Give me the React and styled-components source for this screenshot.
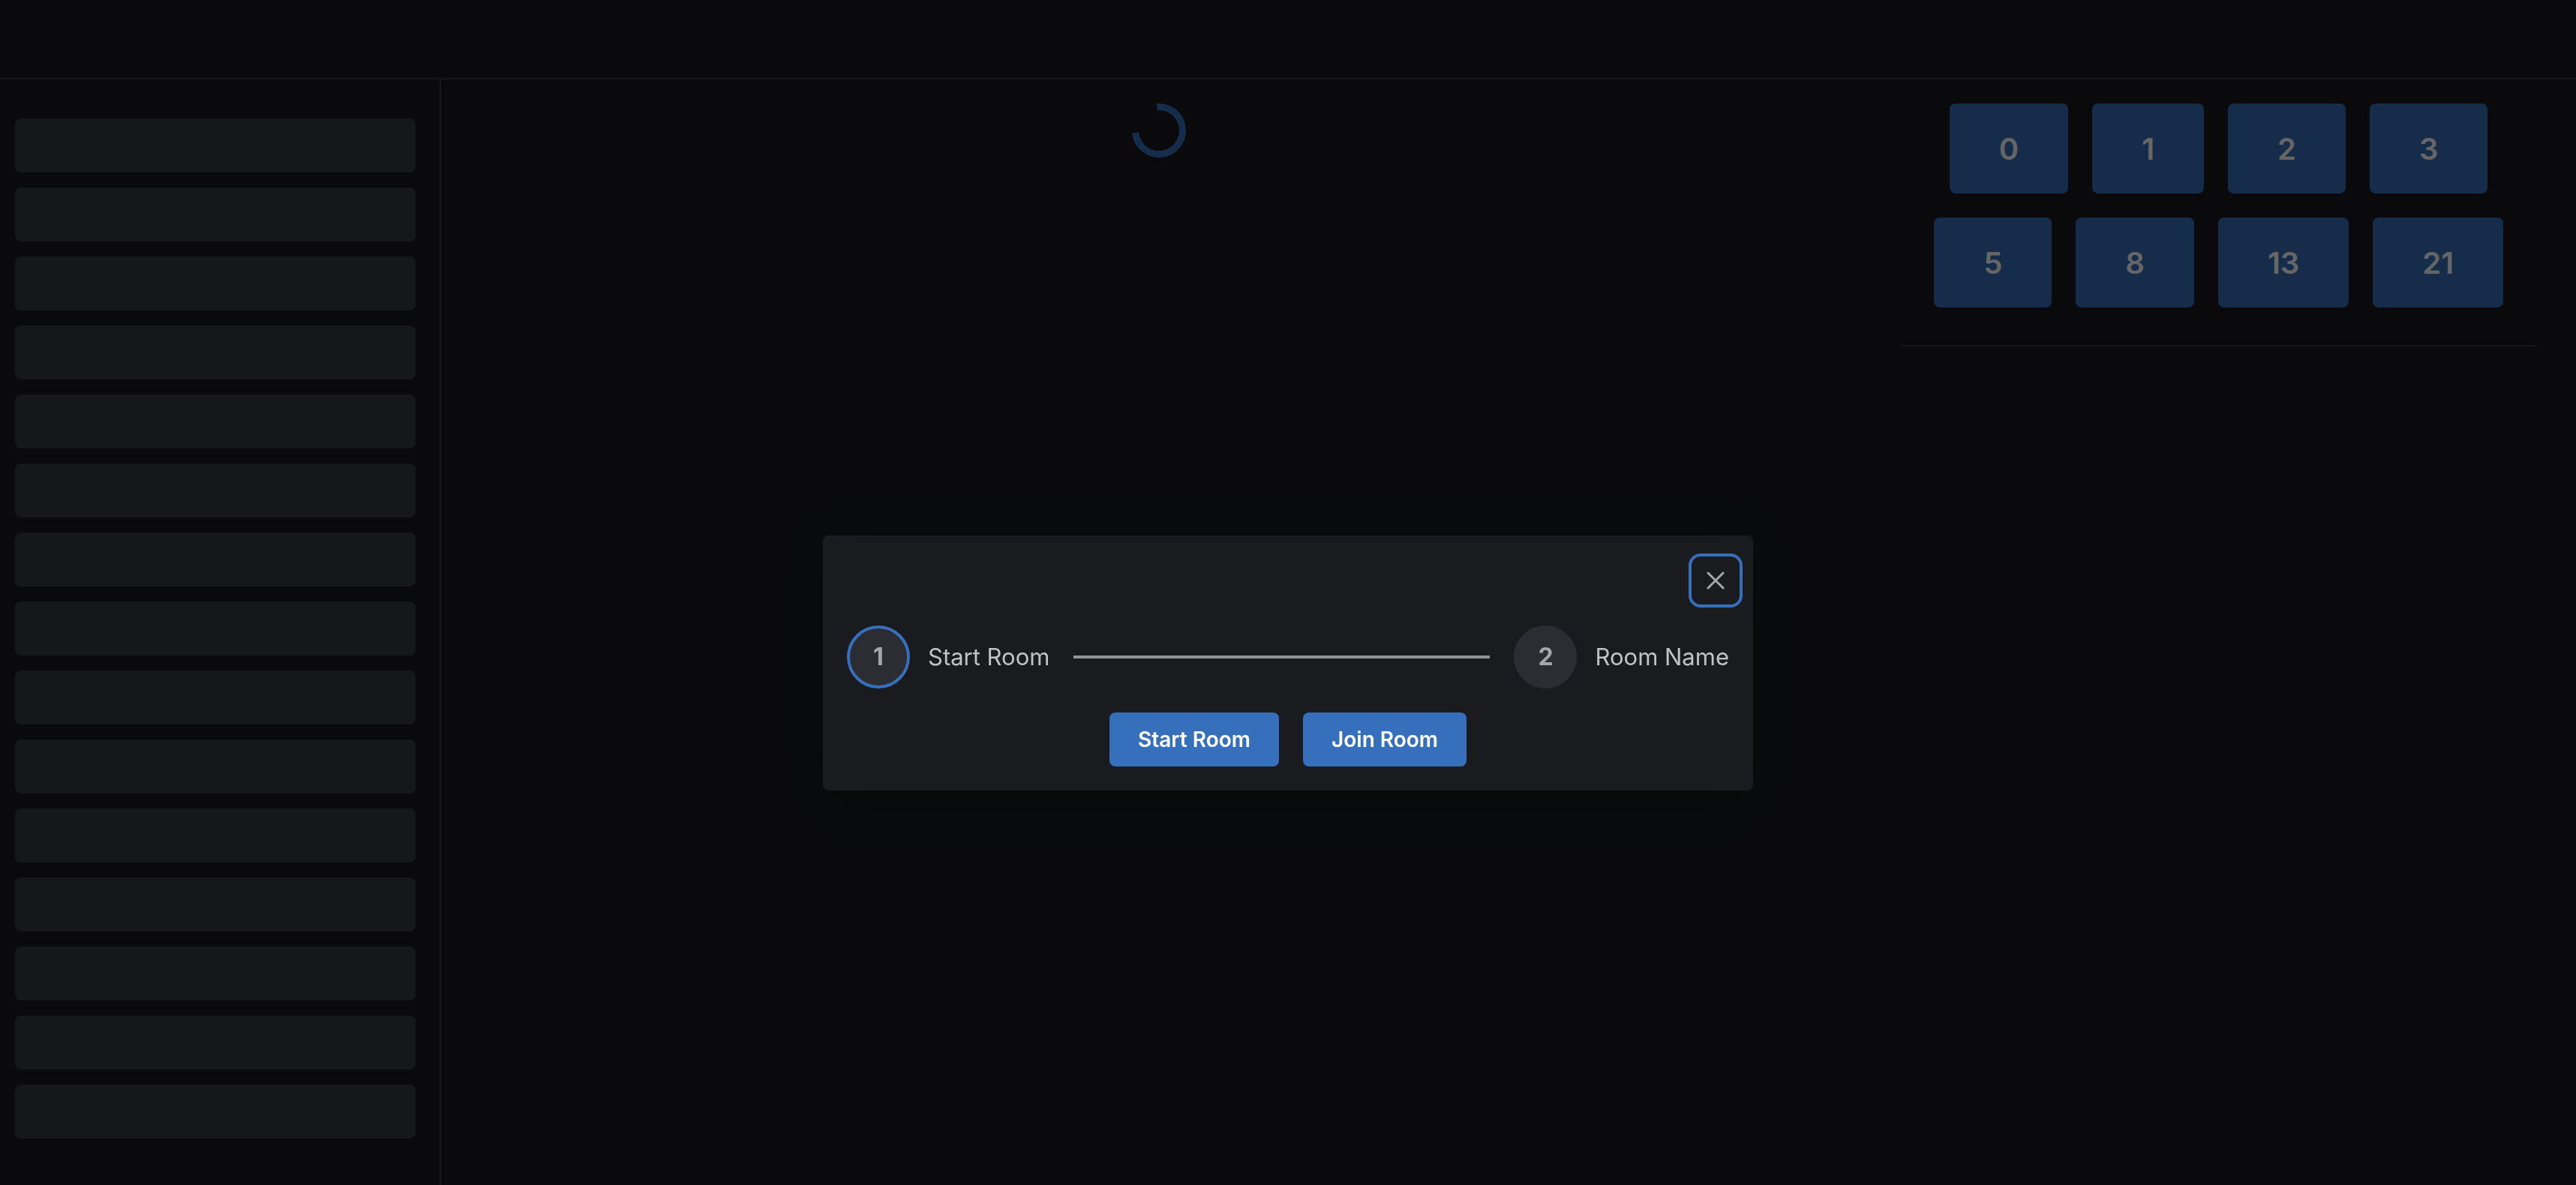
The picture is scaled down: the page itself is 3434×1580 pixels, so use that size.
import React from "react";
import styled, { createGlobalStyle } from "styled-components";

const GlobalStyle = createGlobalStyle`
  * { box-sizing: border-box; }
  body {
    margin: 0;
    background: #191b1f;
    color: #c1c2c5;
    font-family: Inter, "Liberation Sans", sans-serif;
  }
`;

const Page = styled.div`
  min-height: 100vh;
  display: flex;
  flex-direction: column;
`;

const Header = styled.header`
  height: 106px;
  border-bottom: 2px solid #373a40;
`;

const Body = styled.div`
  flex: 1;
  display: flex;
`;

const Sidebar = styled.aside`
  width: 588px;
  flex-shrink: 0;
  padding: 52px 32px 52px 20px;
  border-right: 2px solid #373a40;
  display: flex;
  flex-direction: column;
  gap: 20px;
`;

const Skeleton = styled.div`
  height: 72px;
  border-radius: 8px;
  background: #393b40;
`;

const Content = styled.main`
  flex: 1;
  display: grid;
  grid-template-columns: 32fr 15fr;
  align-items: start;
  gap: 86px;
  padding: 32px 53px 32px 54px;
`;

const Board = styled.section`
  display: flex;
  justify-content: center;
`;

const Panel = styled.section`
  padding-bottom: 50px;
  border-bottom: 2px solid #373a40;
  display: flex;
  flex-direction: column;
  gap: 32px;
`;

const CardRow = styled.div`
  display: flex;
  justify-content: center;
  gap: 32px;
`;

const Button = styled.button`
  border: 0;
  border-radius: 8px;
  background: #366fbc;
  color: #fff;
  font-family: inherit;
  font-weight: 600;
  height: ${(p) => (p.$large ? 120 : 72)}px;
  padding: 0 ${(p) => (p.$large ? 66 : 38)}px;
  font-size: ${(p) => (p.$large ? 40 : 28)}px;
`;

const Overlay = styled.div`
  position: fixed;
  inset: 0;
  display: flex;
  align-items: center;
  justify-content: center;
  padding-top: 188px;
  background: rgba(0, 0, 0, 0.6);
`;

const Dialog = styled.div`
  width: 1240px;
  max-width: 100%;
  padding: 32px;
  border-radius: 8px;
  background: #1a1b1e;
  box-shadow: 0 2px 6px rgba(0, 0, 0, 0.05),
    0 72px 56px -14px rgba(0, 0, 0, 0.05),
    0 34px 24px -14px rgba(0, 0, 0, 0.04),
    0 0 64px rgba(0, 0, 0, 0.2);
  display: flex;
  flex-direction: column;
  gap: 32px;
`;

const DialogHeader = styled.div`
  display: flex;
  justify-content: flex-end;
  margin-right: -10px;
`;

const CloseButton = styled.button`
  display: flex;
  align-items: center;
  justify-content: center;
  width: 56px;
  height: 56px;
  padding: 0;
  border: 0;
  border-radius: 8px;
  background: transparent;
  color: #a6a7ab;
  outline: 4px solid #366fbc;
  outline-offset: 4px;
`;

const Steps = styled.div`
  display: flex;
  align-items: center;
  gap: 32px;
`;

const Step = styled.div`
  display: flex;
  align-items: center;
  gap: 24px;
  font-size: 31px;
  line-height: 40px;
  white-space: nowrap;
`;

const StepIcon = styled.span`
  display: flex;
  align-items: center;
  justify-content: center;
  width: 84px;
  height: 84px;
  border-radius: 50%;
  border: 4px solid ${(p) => (p.$active ? "#366fbc" : "#2c2d32")};
  background: #2c2d32;
  color: #a6a7ab;
  font-size: 32px;
  font-weight: 700;
`;

const Separator = styled.div`
  flex: 1;
  height: 4px;
  background: #909296;
`;

const Actions = styled.div`
  display: flex;
  justify-content: center;
  gap: 32px;
`;

const cardRows = [
  [0, 1, 2, 3],
  [5, 8, 13, 21],
];

function Loader() {
  return (
    <svg width="72" height="72" viewBox="0 0 72 72" role="img" aria-label="Loading">
      <circle
        cx="36"
        cy="36"
        r="31.5"
        fill="none"
        stroke="#366fbc"
        strokeWidth="9"
        pathLength="360"
        strokeDasharray="270 90"
        transform="rotate(-95 36 36)"
      />
    </svg>
  );
}

function CloseIcon() {
  return (
    <svg width="32" height="32" viewBox="0 0 32 32" fill="none" aria-hidden="true">
      <path d="M6 6L26 26M26 6L6 26" stroke="currentColor" strokeWidth="3" strokeLinecap="round" />
    </svg>
  );
}

export default function App() {
  return (
    <>
      <GlobalStyle />
      <Page>
        <Header />
        <Body>
          <Sidebar>
            {Array.from({ length: 15 }, (_, i) => (
              <Skeleton key={i} />
            ))}
          </Sidebar>
          <Content>
            <Board>
              <Loader />
            </Board>
            <Panel>
              {cardRows.map((row) => (
                <CardRow key={row[0]}>
                  {row.map((n) => (
                    <Button key={n} type="button" $large>
                      {n}
                    </Button>
                  ))}
                </CardRow>
              ))}
            </Panel>
          </Content>
        </Body>
      </Page>
      <Overlay>
        <Dialog role="dialog" aria-modal="true" aria-label="Start Room">
          <DialogHeader>
            <CloseButton type="button" aria-label="Close">
              <CloseIcon />
            </CloseButton>
          </DialogHeader>
          <Steps>
            <Step>
              <StepIcon $active>1</StepIcon>
              Start Room
            </Step>
            <Separator />
            <Step>
              <StepIcon>2</StepIcon>
              Room Name
            </Step>
          </Steps>
          <Actions>
            <Button type="button">Start Room</Button>
            <Button type="button">Join Room</Button>
          </Actions>
        </Dialog>
      </Overlay>
    </>
  );
}
